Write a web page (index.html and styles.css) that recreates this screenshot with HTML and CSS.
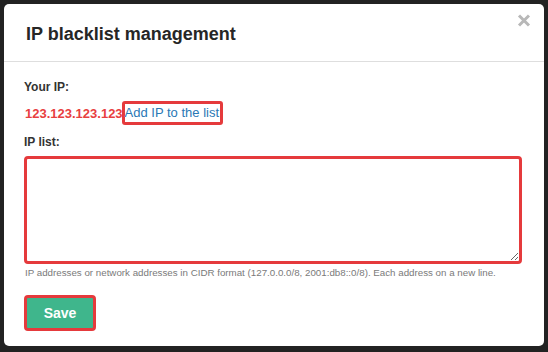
FILE: index.html
```html
<!DOCTYPE html>
<html>
<head>
<meta charset="utf-8">
<link rel="stylesheet" href="styles.css">
</head>
<body>
<div class="modal">
  <div class="modal-header">
    <h2 class="modal-title">IP blacklist management</h2>
    <button class="close" aria-label="Close">
      <svg width="14" height="13" viewBox="0 0 14 13"><path d="M2 1.5 L12 11.5 M12 1.5 L2 11.5" stroke="#b8b8b8" stroke-width="3" stroke-linecap="butt"/></svg>
    </button>
  </div>
  <div class="modal-body">
    <div class="label">Your IP:</div>
    <div class="ip-row">
      <span class="ip">123.123.123.123</span><a class="add-link" href="#">Add IP to the list</a>
    </div>
    <div class="label list-label">IP list:</div>
    <textarea class="ip-list"></textarea>
    <div class="help">IP addresses or network addresses in CIDR format (127.0.0.0/8, 2001:db8::0/8). Each address on a new line.</div>
    <div class="actions">
      <button class="save">Save</button>
    </div>
  </div>
</div>
</body>
</html>
```

FILE: styles.css
```css
html, body {
  margin: 0;
  padding: 0;
  background: #222222;
  font-family: "Liberation Sans", Arial, sans-serif;
}
.modal {
  margin: 4px 0 0 4px;
  width: 540px;
  height: 342px;
  background: #ffffff;
  border-radius: 5px;
  box-sizing: border-box;
}
.modal-header {
  display: flex;
  justify-content: space-between;
  align-items: flex-start;
  height: 58px;
  border-bottom: 1px solid #dedede;
  box-sizing: border-box;
  padding: 0 13px 0 22px;
}
.modal-title {
  margin: 0;
  padding-top: 19px;
  font-size: 18px;
  font-weight: bold;
  color: #262626;
  line-height: 22px;
}
.close {
  border: 0;
  background: none;
  padding: 0;
  margin-top: 10px;
  cursor: pointer;
  display: flex;
}
.modal-body {
  padding: 18px 20px 0 20px;
}
.label {
  font-size: 12px;
  font-weight: bold;
  color: #333333;
  line-height: 14px;
}
.ip-row {
  display: flex;
  align-items: center;
  margin-top: 7px;
  height: 24px;
}
.ip {
  color: #e8403f;
  font-size: 13px;
  font-weight: bold;
  padding-left: 1px;
}
.add-link {
  color: #2a78b5;
  font-size: 13px;
  text-decoration: none;
  border: 3px solid #e53a3c;
  border-radius: 3px;
  padding: 0 1px 0 0;
  margin-left: -1px;
  line-height: 18px;
}
.list-label {
  margin-top: 10px;
}
.ip-list {
  display: block;
  margin-top: 7px;
  width: 498px;
  height: 108px;
  box-sizing: border-box;
  border: 3px solid #e53a3c;
  border-radius: 4px;
  resize: vertical;
  outline: none;
}
.help {
  font-size: 9.75px;
  color: #7a7a7a;
  margin-top: 3px;
  padding-left: 1px;
  line-height: 12px;
}
.actions {
  margin-top: 16px;
}
.save {
  width: 72px;
  height: 36px;
  background: #3fb68c;
  border: 3px solid #e53a3c;
  border-radius: 4px;
  color: #ffffff;
  font-family: "Liberation Sans", Arial, sans-serif;
  font-size: 14px;
  font-weight: bold;
  padding: 0;
  cursor: pointer;
}
```
